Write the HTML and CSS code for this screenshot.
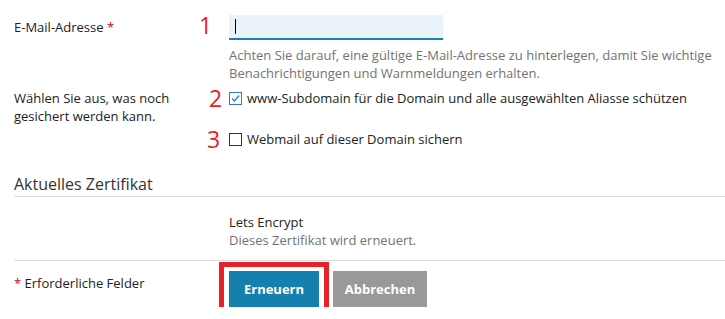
FILE: index.html
```html
<!DOCTYPE html>
<html lang="de">
<head>
<meta charset="utf-8">
<title>Zertifikat</title>
<link rel="stylesheet" href="styles.css">
</head>
<body>
<div class="page">
  <div class="row row-email">
    <div class="label">E-Mail-Adresse <span class="req">*</span></div>
    <div class="field">
      <span class="mark mark-1">1</span>
      <div class="input"><span class="caret"></span></div>
      <div class="help">Achten Sie darauf, eine gültige E-Mail-Adresse zu hinterlegen, damit Sie wichtige Benachrichtigungen und Warnmeldungen erhalten.</div>
    </div>
  </div>

  <div class="row row-secure">
    <div class="label">Wählen Sie aus, was noch gesichert werden kann.</div>
    <div class="field">
      <label class="check check-www">
        <span class="mark mark-2">2</span>
        <svg class="box" width="13" height="13" viewBox="0 0 13 13"><rect x="0.5" y="0.5" width="12" height="12" fill="#fff" stroke="#2a7fc4"/><polyline points="3,6.5 5.5,9 10,3.5" fill="none" stroke="#2a7fc4" stroke-width="1.3"/></svg>
        <span>www-Subdomain für die Domain und alle ausgewählten Aliasse schützen</span>
      </label>
      <label class="check check-mail">
        <span class="mark mark-3">3</span>
        <svg class="box" width="13" height="13" viewBox="0 0 13 13"><rect x="0.5" y="0.5" width="12" height="12" fill="#fff" stroke="#333"/></svg>
        <span>Webmail auf dieser Domain sichern</span>
      </label>
    </div>
  </div>

  <h2 class="section">Aktuelles Zertifikat</h2>

  <div class="row row-cert">
    <div class="label"></div>
    <div class="field">
      <div class="cert-name">Lets Encrypt</div>
      <div class="help">Dieses Zertifikat wird erneuert.</div>
    </div>
  </div>

  <div class="row row-footer">
    <div class="label"><span class="req">*</span> Erforderliche Felder</div>
    <div class="field buttons">
      <button class="btn btn-primary highlighted">Erneuern</button>
      <button class="btn btn-cancel">Abbrechen</button>
    </div>
  </div>
</div>
</body>
</html>
```

FILE: styles.css
```css
html, body {
  margin: 0;
  padding: 0;
  background: #fff;
}
body {
  font-family: "Open Sans", "Noto Sans", sans-serif;
  font-size: 13px;
  line-height: 18px;
  color: #222;
}
.page {
  padding: 15px 0 0 14px;
}
.row {
  display: grid;
  grid-template-columns: 215px 1fr;
}
.label {
  padding-right: 20px;
}
.field {
  position: relative;
}
.req {
  color: #d0021b;
}
.row-email .label {
  padding-top: 3px;
}
.input {
  height: 23px;
  background: #ebf3fa;
  border-bottom: 2px solid #1b7db5;
  display: flex;
  align-items: center;
  padding-left: 6px;
  box-sizing: content-box;
  width: 208px;
}
.caret {
  width: 1px;
  height: 15px;
  background: #000;
}
.help {
  color: #737373;
  margin-top: 6px;
}
.row-secure {
  margin-top: 7px;
}
.check {
  display: flex;
  align-items: center;
  gap: 5px;
  position: relative;
}
.check-mail {
  margin-top: 23px;
}
.box {
  flex: none;
}
.mark {
  position: absolute;
  color: #ec1c24;
  font-size: 23px;
  line-height: 24px;
}
.mark-1 { left: -30px; top: -2px; }
.mark-2 { left: -20px; top: -3px; }
.mark-3 { left: -22px; top: -3px; }
.section {
  margin: 25px 0 0 0;
  font-size: 16px;
  font-weight: 400;
  line-height: 22px;
  color: #333;
  padding-bottom: 1px;
  border-bottom: 1px solid #ddd;
}
.row-cert {
  padding: 16px 0 11px 0;
  border-bottom: 1px solid #ddd;
}
.row-cert .help {
  margin-top: 0;
}
.row-footer {
  padding-top: 10px;
}
.row-footer .label {
  padding-top: 3px;
}
.buttons {
  display: flex;
  gap: 14px;
}
.btn {
  height: 36px;
  border: 0;
  font-family: "Open Sans", "Noto Sans", sans-serif;
  font-size: 13px;
  font-weight: 700;
  color: #fff;
  padding: 0;
  cursor: pointer;
}
.btn-primary {
  width: 90px;
  background: #157fae;
}
.btn-cancel {
  width: 94px;
  background: #999;
}
.highlighted {
  position: relative;
}
.highlighted::after {
  content: "";
  position: absolute;
  left: -10px;
  right: -10px;
  top: -9px;
  bottom: -9px;
  border: 5px solid #e8202a;
}
```
